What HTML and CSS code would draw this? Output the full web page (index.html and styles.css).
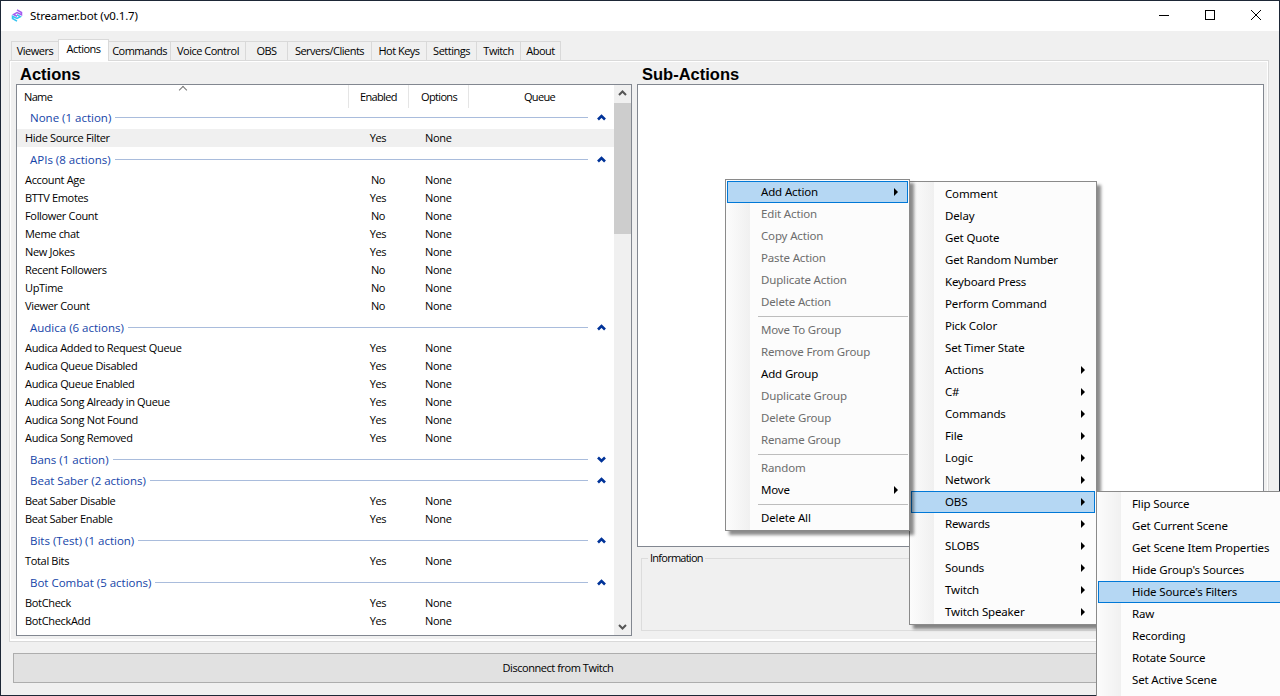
FILE: index.html
```html
<!DOCTYPE html>
<html>
<head>
  <title>Streamer.bot</title>
  <link rel="stylesheet" href="styles.css">
</head>
<body>
  <div class="window">
    <div class="titlebar">
      <svg class="app-icon" width="12" height="15" viewBox="0 0 16 18">
        <path d="M8 1.5 L14 5 L14 8 L8 5 L3.5 7.5 L8 10" fill="none" stroke="#a45cf0" stroke-width="2"/>
        <path d="M8 16.5 L2 13 L2 10 L8 13 L12.5 10.5 L8 8" fill="none" stroke="#35c3f0" stroke-width="2"/>
      </svg>
      <span class="app-title">Streamer.bot (v0.1.7)</span>
      <div class="window-buttons">
        <svg width="46" height="30" viewBox="0 0 46 30"><path d="M18 14.5h10" stroke="#000" fill="none"/></svg>
        <svg width="46" height="30" viewBox="0 0 46 30"><rect x="18.5" y="9.5" width="9" height="9" stroke="#000" fill="none"/></svg>
        <svg width="46" height="30" viewBox="0 0 46 30"><path d="M18 9l10 10M28 9l-10 10" stroke="#000" fill="none"/></svg>
      </div>
    </div>

    <div class="content">
      <div class="tabs">
        <div class="tab" style="width:48px">Viewers</div>
        <div class="tab active" style="width:51px">Actions</div>
        <div class="tab" style="width:62px">Commands</div>
        <div class="tab" style="width:75px">Voice Control</div>
        <div class="tab" style="width:42px">OBS</div>
        <div class="tab" style="width:84px">Servers/Clients</div>
        <div class="tab" style="width:55px">Hot Keys</div>
        <div class="tab" style="width:50px">Settings</div>
        <div class="tab" style="width:44px">Twitch</div>
        <div class="tab" style="width:40px">About</div>
      </div>

      <div class="panel">
        <div class="col-left">
          <h2>Actions</h2>
          <div class="listview">
            <div class="list-main">
              <div class="list-header">
                <div class="hcol hname">Name<span class="sort-arrow"></span></div>
                <div class="hcol henabled">Enabled</div>
                <div class="hcol hoptions">Options</div>
                <div class="hcol hqueue">Queue</div>
              </div>
              <div class="list-body" id="list-body"></div>
            </div>
            <div class="scrollbar">
              <svg width="17" height="17" viewBox="0 0 17 17"><path d="M5 10l3.5-3.5L12 10" stroke="#555" stroke-width="2" fill="none"/></svg>
              <div class="track"><div class="thumb"></div></div>
              <svg width="17" height="17" viewBox="0 0 17 17"><path d="M5 7l3.5 3.5L12 7" stroke="#555" stroke-width="2" fill="none"/></svg>
            </div>
          </div>
        </div>
        <div class="col-right">
          <h2>Sub-Actions</h2>
          <div class="subactions"></div>
          <fieldset class="info">
            <legend>Information</legend>
          </fieldset>
        </div>
      </div>

      <div class="button-row">
        <div class="connect-btn">Disconnect from Twitch</div>
      </div>
    </div>

    <div class="menu menu-one" id="menu-one"></div>
    <div class="menu menu-two" id="menu-two"></div>
    <div class="menu menu-three" id="menu-three"></div>
  </div>

  <script src="script.js"></script>
</body>
</html>
```

FILE: styles.css
```css
html, body {
  margin: 0;
  padding: 0;
  height: 696px;
  overflow: hidden;
}

body {
  font-family: "Open Sans", "Noto Sans", sans-serif;
  font-size: 11px;
  color: #000;
  background-color: #f0f0f0;
}

.window {
  position: relative;
  width: 1280px;
  height: 696px;
  box-sizing: border-box;
  border: 1px solid #1d2736;
  display: flex;
  flex-direction: column;
}

.titlebar {
  height: 30px;
  flex: none;
  background-color: #fff;
  display: flex;
  align-items: center;
}

.app-icon {
  margin: 0 0 1px 10px;
}

.app-title {
  margin: 0 0 2px 7px;
  font-family: "Noto Sans", sans-serif;
  font-size: 11.5px;
  letter-spacing: -0.15px;
}

.window-buttons {
  margin-left: auto;
  display: flex;
}

.window-buttons svg {
  display: block;
}

.content {
  flex: 1;
  background-color: #f0f0f0;
  padding: 0 10px 0 8px;
  display: flex;
  flex-direction: column;
}

.tabs {
  height: 29px;
  display: flex;
  align-items: flex-end;
  padding-left: 2px;
  flex: none;
}

.tab {
  height: 19px;
  box-sizing: border-box;
  border: 1px solid #d9d9d9;
  border-bottom: none;
  border-left: none;
  line-height: 18px;
  text-align: center;
  letter-spacing: -0.5px;
  white-space: nowrap;
}

.tab:first-child {
  border-left: 1px solid #d9d9d9;
}

.tab.active {
  height: 22px;
  line-height: 18px;
  background-color: #fff;
  border-left: 1px solid #d9d9d9;
  margin-left: -1px;
  margin-bottom: -1px;
  position: relative;
  z-index: 1;
}

.panel {
  height: 582px;
  flex: none;
  box-sizing: border-box;
  border: 1px solid #d9d9d9;
  box-shadow: inset 1px 1px 0 #fff, inset -1px -2px 0 #fff;
  padding: 0 4px 0 6px;
  display: flex;
  gap: 5px;
}

.col-left {
  width: 616px;
  flex: none;
}

.col-right {
  flex: 1;
  min-width: 0;
}

h2 {
  margin: 0;
  height: 23px;
  line-height: 27px;
  font-family: "Liberation Sans", Arial, sans-serif;
  font-size: 16.5px;
  font-weight: bold;
}

.col-left h2 {
  padding-left: 4px;
}

.col-right h2 {
  padding-left: 5px;
}

.listview {
  height: 552px;
  box-sizing: border-box;
  border: 1px solid #828790;
  background-color: #fff;
  display: flex;
  overflow: hidden;
}

.list-main {
  flex: 1;
  min-width: 0;
}

.list-header {
  height: 23px;
  display: flex;
  line-height: 24px;
  letter-spacing: -0.65px;
}

.hcol {
  box-sizing: border-box;
  border-right: 1px solid #e5e5e5;
  position: relative;
}

.hname {
  width: 332px;
  padding-left: 7px;
}

.henabled {
  width: 60px;
  padding-left: 11px;
}

.hoptions {
  width: 60px;
  padding-left: 12px;
}

.hqueue {
  flex: 1;
  padding-right: 4px;
  text-align: center;
  border-right: none;
}

.sort-arrow {
  position: absolute;
  left: 163px;
  top: 2px;
  width: 5px;
  height: 5px;
  border-left: 1px solid #777;
  border-top: 1px solid #777;
  transform: rotate(45deg);
}

.list-body {
  letter-spacing: -0.33px;
}

.group {
  height: 24px;
  box-sizing: border-box;
  padding: 1px 8px 0 13px;
  display: flex;
  align-items: center;
  gap: 4px;
  color: #1544a8;
  font-size: 11.5px;
  letter-spacing: 0;
}

.group.first {
  height: 21px;
  padding-top: 0;
  padding-bottom: 2px;
}

.group.collapsed {
  height: 21px;
  padding-top: 4px;
}

.group-line {
  flex: 1;
  height: 1px;
  background-color: #a9bcdc;
}

.group svg {
  margin-left: 5px;
}

.row {
  height: 18px;
  line-height: 18px;
  display: flex;
  white-space: nowrap;
}

.row.selected {
  background-color: #f0f0f0;
}

.cell-name {
  width: 332px;
  padding-left: 8px;
  box-sizing: border-box;
}

.cell-enabled {
  width: 58px;
  text-align: center;
}

.cell-options {
  padding-left: 18px;
}

.scrollbar {
  width: 17px;
  flex: none;
  background-color: #f0f0f0;
  display: flex;
  flex-direction: column;
}

.scrollbar svg {
  flex: none;
}

.track {
  flex: 1;
}

.thumb {
  height: 131px;
  margin-top: 1px;
  background-color: #cdcdcd;
}

.subactions {
  height: 463px;
  box-sizing: border-box;
  border: 1px solid #828790;
  background-color: #fff;
}

.info {
  margin: 4px 0 0 4px;
  padding: 0;
  height: 80px;
  box-sizing: border-box;
  border: 1px solid #dcdcdc;
  letter-spacing: -0.75px;
}

.info legend {
  margin-left: 6px;
  padding: 0 2px;
  line-height: 14px;
}

.button-row {
  padding: 11px 0 0 4px;
}

.connect-btn {
  width: 1090px;
  height: 30px;
  box-sizing: border-box;
  border: 1px solid #adadad;
  background-color: #e1e1e1;
  line-height: 28px;
  text-align: center;
  letter-spacing: -0.45px;
}

/* context menus */
.menu {
  position: absolute;
  box-sizing: border-box;
  border: 1px solid #8a8a8a;
  padding: 1px;
  background-color: #fcfcfc;
  box-shadow: 4px 4px 3px rgba(0, 0, 0, 0.45);
  font-family: "Noto Sans", sans-serif;
  font-size: 11.5px;
  letter-spacing: -0.15px;
}

.menu::before {
  content: "";
  position: absolute;
  left: 0;
  top: 0;
  bottom: 0;
  width: 24px;
  background-image: linear-gradient(to right, #fcfcfc, #f0f0f0);
}

.menu-one {
  left: 724px;
  top: 178px;
  width: 185px;
  height: 352px;
  z-index: 3;
}

.menu-two {
  left: 908px;
  top: 180px;
  width: 188px;
  height: 444px;
  z-index: 2;
}

.menu-three {
  left: 1095px;
  top: 490px;
  width: 200px;
  height: 230px;
  z-index: 4;
}

.item {
  position: relative;
  height: 22px;
  box-sizing: border-box;
  line-height: 20px;
  border: 1px solid transparent;
  padding-left: 33px;
  white-space: nowrap;
}

.item.disabled {
  color: #6d6d6d;
}

.item.hot {
  background-color: #b5d7f3;
  border-color: #0078d7;
}

.item.more::after {
  content: "";
  position: absolute;
  right: 9px;
  top: 6px;
  border-left: 4px solid #000;
  border-top: 4px solid transparent;
  border-bottom: 4px solid transparent;
}

.sep {
  position: relative;
  height: 6px;
}

.sep::after {
  content: "";
  position: absolute;
  left: 31px;
  right: 0;
  top: 3px;
  height: 1px;
  background-color: #bdbdbd;
}
```

FILE: script.js
```js
// list rows, grouped the way the real app shows them
var groups = [
  { title: "None (1 action)", first: true, rows: [["Hide Source Filter", "Yes", true]] },
  { title: "APIs (8 actions)", rows: [["Account Age", "No"], ["BTTV Emotes", "Yes"], ["Follower Count", "No"], ["Meme chat", "Yes"], ["New Jokes", "Yes"], ["Recent Followers", "No"], ["UpTime", "No"], ["Viewer Count", "No"]] },
  { title: "Audica (6 actions)", rows: [["Audica Added to Request Queue", "Yes"], ["Audica Queue Disabled", "Yes"], ["Audica Queue Enabled", "Yes"], ["Audica Song Already in Queue", "Yes"], ["Audica Song Not Found", "Yes"], ["Audica Song Removed", "Yes"]] },
  { title: "Bans (1 action)", collapsed: true, rows: [] },
  { title: "Beat Saber (2 actions)", rows: [["Beat Saber Disable", "Yes"], ["Beat Saber Enable", "Yes"]] },
  { title: "Bits (Test) (1 action)", rows: [["Total Bits", "Yes"]] },
  { title: "Bot Combat (5 actions)", rows: [["BotCheck", "Yes"], ["BotCheckAdd", "Yes"], ["BotCheckBuyTrap", "Yes"]] }
];

var upIcon = '<svg width="9" height="7" viewBox="0 0 9 7"><path d="M1 5.5l3.5-3.5L8 5.5" stroke="#003399" stroke-width="2.6" fill="none"/></svg>';
var downIcon = '<svg width="9" height="7" viewBox="0 0 9 7"><path d="M1 1.5L4.5 5 8 1.5" stroke="#003399" stroke-width="2.6" fill="none"/></svg>';

var listHtml = "";
groups.forEach(function(group) {
  var cls = "group" + (group.first ? " first" : "") + (group.collapsed ? " collapsed" : "");
  listHtml += '<div class="' + cls + '"><span>' + group.title + '</span><div class="group-line"></div>' + (group.collapsed ? downIcon : upIcon) + '</div>';
  group.rows.forEach(function(row) {
    listHtml += '<div class="row' + (row[2] ? " selected" : "") + '"><div class="cell-name">' + row[0] + '</div><div class="cell-enabled">' + row[1] + '</div><div class="cell-options">None</div></div>';
  });
});
document.getElementById("list-body").innerHTML = listHtml;

// "-" is a separator, "~" disabled, ">" has a submenu, "*" highlighted
function buildMenu(id, items) {
  var html = "";
  items.forEach(function(item) {
    if (item === "-") {
      html += '<div class="sep"></div>';
      return;
    }
    var cls = "item";
    var name = item;
    while ("~>*".indexOf(name[0]) !== -1) {
      if (name[0] === "~") cls += " disabled";
      if (name[0] === ">") cls += " more";
      if (name[0] === "*") cls += " hot";
      name = name.slice(1);
    }
    html += '<div class="' + cls + '">' + name + '</div>';
  });
  document.getElementById(id).innerHTML = html;
}

buildMenu("menu-one", ["*>Add Action", "~Edit Action", "~Copy Action", "~Paste Action", "~Duplicate Action", "~Delete Action", "-", "~Move To Group", "~Remove From Group", "Add Group", "~Duplicate Group", "~Delete Group", "~Rename Group", "-", "~Random", ">Move", "-", "Delete All"]);
buildMenu("menu-two", ["Comment", "Delay", "Get Quote", "Get Random Number", "Keyboard Press", "Perform Command", "Pick Color", "Set Timer State", ">Actions", ">C#", ">Commands", ">File", ">Logic", ">Network", "*>OBS", ">Rewards", ">SLOBS", ">Sounds", ">Twitch", ">Twitch Speaker"]);
buildMenu("menu-three", ["Flip Source", "Get Current Scene", "Get Scene Item Properties", "Hide Group's Sources", "*Hide Source's Filters", "Raw", "Recording", "Rotate Source", "Set Active Scene", "Set Audio Monitor Type"]);
```
